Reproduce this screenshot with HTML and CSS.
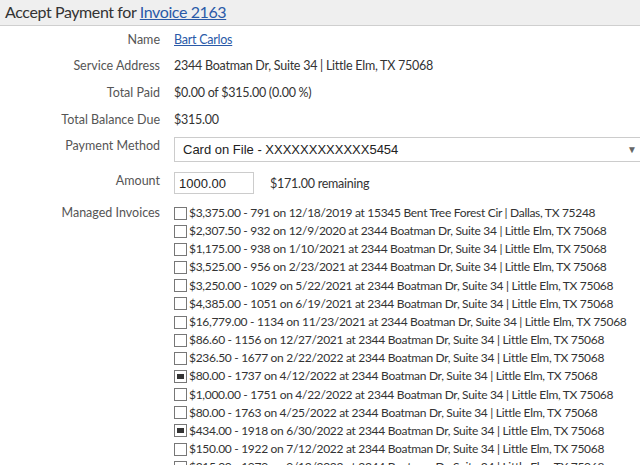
FILE: index.html
```html
<!DOCTYPE html>
<html lang="en">
<head>
  <meta charset="UTF-8">
  <title>Accept Payment</title>
  <link rel="stylesheet" href="styles.css">
</head>
<body>

  <!-- Header -->
  <div class="header">
    <h2>Accept Payment for <a href="#">Invoice 2163</a></h2>
  </div>

  <!-- Payment Form -->
  <form class="payment-form">
    <div class="row">
      <label>Name</label>
      <div class="value"><a href="#">Bart Carlos</a></div>
    </div>
    <div class="row">
      <label>Service Address</label>
      <div class="value">2344 Boatman Dr, Suite 34 | Little Elm, TX 75068</div>
    </div>
    <div class="row">
      <label>Total Paid</label>
      <div class="value">$0.00 of $315.00 (0.00 %)</div>
    </div>
    <div class="row">
      <label>Total Balance Due</label>
      <div class="value">$315.00</div>
    </div>
    <div class="row field-row method-row">
      <label>Payment Method</label>
      <div class="select-box">
        <span>Card on File - XXXXXXXXXXXX5454</span>
        <span class="arrow">&#9660;</span>
      </div>
    </div>
    <div class="row field-row amount-row">
      <label>Amount</label>
      <div class="amount">
        <input type="text" value="1000.00" />
        <span class="remaining">$171.00 remaining</span>
      </div>
    </div>
    <div class="row field-row invoices-row">
      <label>Managed Invoices</label>
      <ul class="invoice-list">
        <li><span class="check"></span>$3,375.00 - 791 on 12/18/2019 at 15345 Bent Tree Forest Cir | Dallas, TX 75248</li>
        <li><span class="check"></span>$2,307.50 - 932 on 12/9/2020 at 2344 Boatman Dr, Suite 34 | Little Elm, TX 75068</li>
        <li><span class="check"></span>$1,175.00 - 938 on 1/10/2021 at 2344 Boatman Dr, Suite 34 | Little Elm, TX 75068</li>
        <li><span class="check"></span>$3,525.00 - 956 on 2/23/2021 at 2344 Boatman Dr, Suite 34 | Little Elm, TX 75068</li>
        <li><span class="check"></span>$3,250.00 - 1029 on 5/22/2021 at 2344 Boatman Dr, Suite 34 | Little Elm, TX 75068</li>
        <li><span class="check"></span>$4,385.00 - 1051 on 6/19/2021 at 2344 Boatman Dr, Suite 34 | Little Elm, TX 75068</li>
        <li><span class="check"></span>$16,779.00 - 1134 on 11/23/2021 at 2344 Boatman Dr, Suite 34 | Little Elm, TX 75068</li>
        <li><span class="check"></span>$86.60 - 1156 on 12/27/2021 at 2344 Boatman Dr, Suite 34 | Little Elm, TX 75068</li>
        <li><span class="check"></span>$236.50 - 1677 on 2/22/2022 at 2344 Boatman Dr, Suite 34 | Little Elm, TX 75068</li>
        <li><span class="check checked"></span>$80.00 - 1737 on 4/12/2022 at 2344 Boatman Dr, Suite 34 | Little Elm, TX 75068</li>
        <li><span class="check"></span>$1,000.00 - 1751 on 4/22/2022 at 2344 Boatman Dr, Suite 34 | Little Elm, TX 75068</li>
        <li><span class="check"></span>$80.00 - 1763 on 4/25/2022 at 2344 Boatman Dr, Suite 34 | Little Elm, TX 75068</li>
        <li><span class="check checked"></span>$434.00 - 1918 on 6/30/2022 at 2344 Boatman Dr, Suite 34 | Little Elm, TX 75068</li>
        <li><span class="check"></span>$150.00 - 1922 on 7/12/2022 at 2344 Boatman Dr, Suite 34 | Little Elm, TX 75068</li>
        <li><span class="check"></span>$315.00 - 1979 on 9/13/2022 at 2344 Boatman Dr, Suite 34 | Little Elm, TX 75068</li>
      </ul>
    </div>
  </form>

</body>
</html>
```

FILE: styles.css
```css
/* Basic Reset */
* {
  margin: 0;
  padding: 0;
  box-sizing: border-box;
}
body {
  font-family: Lato, "Noto Sans", sans-serif;
  font-size: 12.5px;
  color: #333;
  background-color: #fff;
  overflow: hidden;
}
a {
  color: #2a5aa8;
}

/* Header */
.header {
  background-color: #efefef;
  border-bottom: 1px solid #cfcfcf;
  height: 26px;
  padding-left: 5px;
}
.header h2 {
  font-weight: normal;
  font-size: 16px;
  letter-spacing: -0.4px;
  line-height: 24px;
  color: #333;
}

/* Form Rows */
.row {
  display: grid;
  grid-template-columns: 160px 1fr;
  column-gap: 14px;
  align-items: center;
  height: 27px;
  white-space: nowrap;
}
.row:first-child {
  height: 26px;
}
.row label {
  text-align: right;
  color: #555;
}
.value {
  letter-spacing: -0.25px;
}
.field-row {
  align-items: start;
  height: auto;
}
.field-row label {
  line-height: 18px;
}

/* Payment Method */
.method-row {
  margin-top: 4px;
}
.select-box {
  display: flex;
  justify-content: space-between;
  align-items: center;
  height: 25px;
  border: 1px solid #ccc;
  padding: 0 0 0 8px;
  margin-right: -10px;
  font-family: "Liberation Sans", Arial, sans-serif;
  font-size: 13px;
  color: #222;
}
.select-box .arrow {
  font-size: 10px;
  color: #666;
  padding-right: 12px;
}

/* Amount */
.amount-row {
  margin-top: 10px;
}
.amount {
  display: flex;
  align-items: center;
  gap: 16px;
}
.amount input {
  width: 80px;
  height: 22px;
  border: 1px solid #ccc;
  padding: 0 4px;
  font-family: "Liberation Sans", Arial, sans-serif;
  font-size: 13px;
  color: #222;
}
.remaining {
  letter-spacing: -0.25px;
}

/* Managed Invoices */
.invoices-row {
  margin-top: 10px;
}
.invoice-list {
  list-style: none;
  line-height: 18.15px;
  font-size: 12px;
  letter-spacing: -0.3px;
}
.invoice-list li {
  display: flex;
  align-items: center;
}
.check {
  width: 13px;
  height: 13px;
  border: 1px solid #777;
  background-color: #fff;
  margin-right: 2px;
  display: inline-flex;
  justify-content: center;
  align-items: center;
}
.check.checked::after {
  content: "";
  width: 7px;
  height: 5px;
  background-color: #333;
}
```
